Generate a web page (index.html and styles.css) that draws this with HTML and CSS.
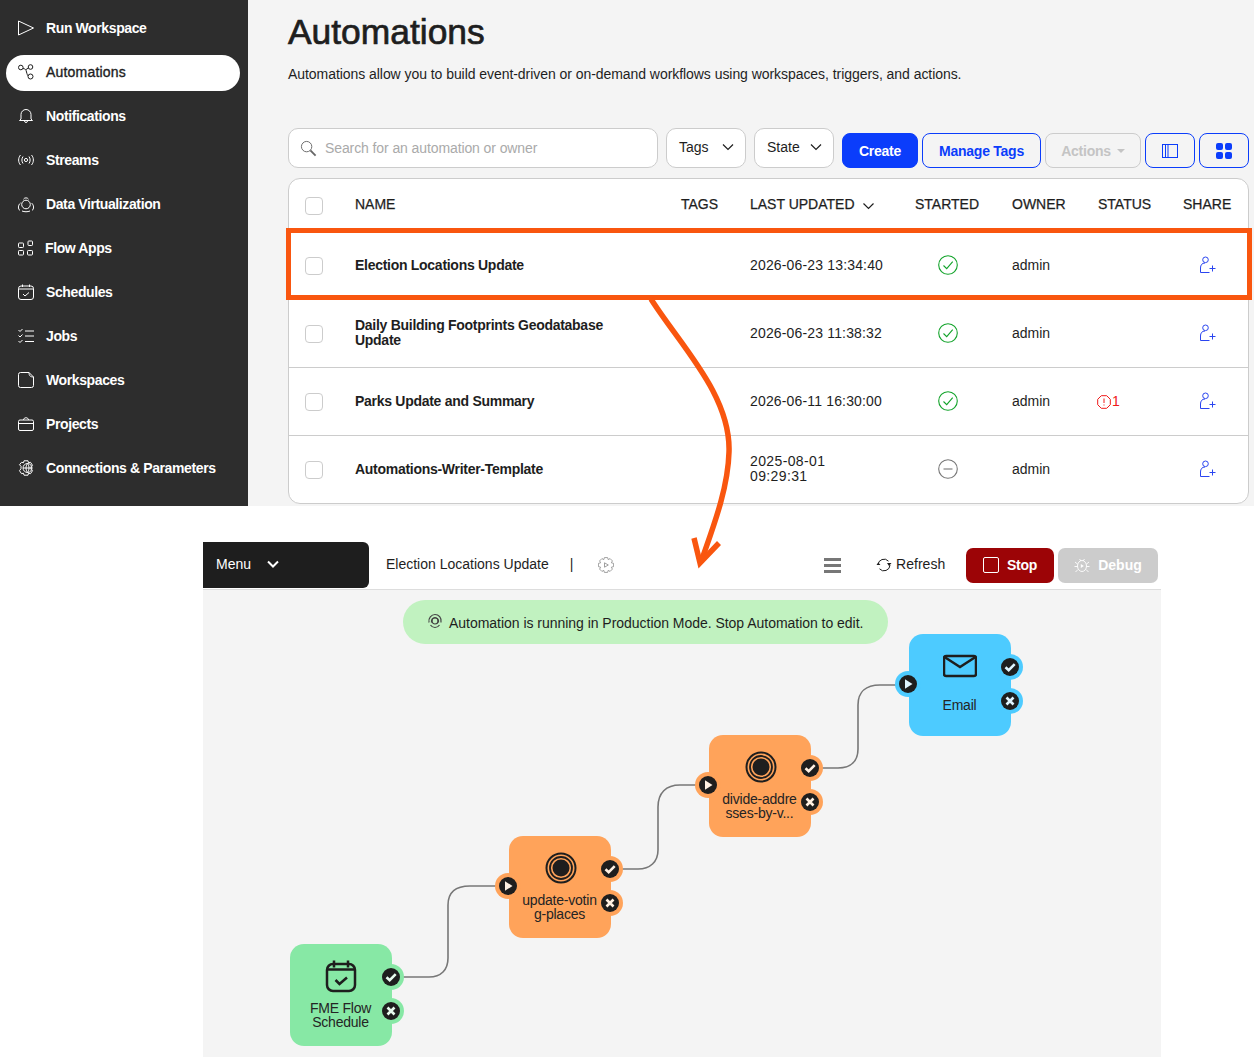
FILE: index.html
```html
<!DOCTYPE html>
<html lang="en">
<head>
<meta charset="utf-8">
<title>Automations</title>
<link rel="stylesheet" href="styles.css">
</head>
<body>
<div class="page">
  <section class="admin">
    <nav class="sidebar">
      <a class="nav-item"><svg class="nav-icon" viewBox="0 0 16 16"><path d="M.5 1v14L15.5 8z"/></svg>Run Workspace</a>
      <a class="nav-item active"><svg class="nav-icon" viewBox="0 0 16 16"><circle cx="2.800" cy="3.500" r="2.300"/><circle cx="12.500" cy="3" r="2.300"/><circle cx="12.500" cy="12.500" r="2.500"/><path d="M5 4.500c3 .5 3 1.500 3.500 3.500s1 3.300 1.700 4M8 5.500l2.500-1.500"/></svg>Automations</a>
      <a class="nav-item"><svg class="nav-icon" viewBox="0 0 16 16"><path d="M3 11V6.500a5 5 0 0 1 10 0V11l1.500 1.500h-13zM6.500 13c0 2 3 2 3 0"/></svg>Notifications</a>
      <a class="nav-item"><svg class="nav-icon" viewBox="0 0 16 16"><circle cx="8" cy="8" r="1.600"/><path d="M5 4.500c-1.500 2-1.500 5 0 7M11 4.500c1.500 2 1.500 5 0 7M2.500 3c-2.500 3-2.500 7 0 10M13.500 3c2.500 3 2.500 7 0 10"/></svg>Streams</a>
      <a class="nav-item"><svg class="nav-icon" viewBox="0 0 16 16"><circle cx="8" cy="8.500" r="4.300"/><path d="M5.500 3.200a3 3 0 0 1 5 0M2.500 7C0 9-.3 13 2 14.500M13.500 7c2.500 2 2.800 6 .5 7.500M4 15c2.500 1 5.500 1 8 0"/></svg>Data Virtualization</a>
      <a class="nav-item flow"><svg class="nav-icon" viewBox="0 0 16 16"><rect x=".5" y="3" width="5" height="4.500" rx=".8"/><rect x="10" y="1" width="4.500" height="4.500" rx=".8"/><rect x=".5" y="10.500" width="5" height="4.500" rx=".8"/><rect x="9.500" y="10.500" width="5" height="4.500" rx=".8"/></svg>Flow Apps</a>
      <a class="nav-item"><svg class="nav-icon" viewBox="0 0 16 16"><rect x=".5" y="2" width="15" height="13.500" rx="2.500"/><path d="M4.500.5v2.500M11.500.5v2.500M.5 5h15M5 10l2 2 4-3.500"/></svg>Schedules</a>
      <a class="nav-item"><svg class="nav-icon" viewBox="0 0 16 16"><path d="M.5 2l1.500 1.500L4.500 1M.5 7.500L2 9l2.500-2.500M.5 13L2 14.500 4.500 12M7 3h9M7 8h9M7 13.500h9"/></svg>Jobs</a>
      <a class="nav-item"><svg class="nav-icon" viewBox="0 0 16 16"><path d="M2.500.5h8.500l4.500 4.500v8.500a2 2 0 0 1-2 2h-11a2 2 0 0 1-2-2v-11a2 2 0 0 1 2-2zM11 .5c0 3 1 4.500 4.500 4.500"/></svg>Workspaces</a>
      <a class="nav-item"><svg class="nav-icon" viewBox="0 0 16 16"><rect x=".5" y="4" width="15" height="10.500" rx="1.500"/><path d="M.5 7.500h15M5.500 4c0-3 5-3 5 0"/></svg>Projects</a>
      <a class="nav-item"><svg class="nav-icon" viewBox="0 0 16 16"><path d="M6 .8h4l.5 2 2-.5 2 3-1.500 1.500v2.400l1.500 1.500-2 3-2-.5-.5 2H6l-.5-2-2 .5-2-3L3 8.700V6.300L1.500 4.800l2-2.500 2 .5z"/><circle cx="9.500" cy="8" r="4.500"/><path d="M5 8h9M9.500 3.500c-2 3-2 6 0 9M9.500 3.500c2 3 2 6 0 9"/></svg>Connections &amp; Parameters</a>
    </nav>
    <main class="content">
      <h1 class="title">Automations</h1>
      <p class="intro">Automations allow you to build event-driven or on-demand workflows using workspaces, triggers, and actions.</p>
      <div class="toolbar">
        <label class="search">
          <svg class="search-icon" viewBox="0 0 18 18"><circle cx="7" cy="7" r="5.500"/><path d="M11 11l5.500 5.500" stroke-width="2"/></svg>
          <span>Search for an automation or owner</span>
        </label>
        <div class="select">Tags<svg class="chev" viewBox="0 0 12 8"><path d="M1 1.500l5 5 5-5"/></svg></div>
        <div class="select">State<svg class="chev" viewBox="0 0 12 8"><path d="M1 1.500l5 5 5-5"/></svg></div>
        <button class="btn btn-primary create">Create</button>
        <button class="btn btn-outline manage">Manage Tags</button>
        <button class="btn btn-disabled actions">Actions<i class="caret"></i></button>
        <button class="btn btn-outline square"><svg class="view-icon" viewBox="0 0 16 14"><rect x=".5" y=".5" width="15" height="13"/><path d="M3.500.5v13M6 .5v13"/></svg></button>
        <button class="btn btn-outline square"><span class="grid-icon"><i></i><i></i><i></i><i></i></span></button>
      </div>
      <div class="table">
        <div class="row head">
          <span class="check"></span><span>NAME</span><span>TAGS</span>
          <span class="sort">LAST UPDATED<svg class="chev sort-chev" viewBox="0 0 12 8"><path d="M1 1.500l5 5 5-5"/></svg></span>
          <span>STARTED</span><span>OWNER</span><span>STATUS</span><span>SHARE</span>
        </div>
        <div class="row">
          <span class="check"></span><strong>Election Locations Update</strong><span></span><span class="date">2026-06-23 13:34:40</span>
          <span class="state-cell"><svg class="state ok" viewBox="0 0 20 20"><circle cx="10" cy="10" r="9.300"/><path d="M5.500 10.500l3.200 3.200 6-7"/></svg></span>
          <span>admin</span><span></span>
          <span><svg class="share" viewBox="0 0 18 18"><circle cx="7.500" cy="3.800" r="2.800"/><path d="M7 7c-3 0-4.500 2-4.500 5v4.500h9M11.500 12.500h6M14.500 9.500v6"/></svg></span>
        </div>
        <div class="row">
          <span class="check"></span><strong class="wrap">Daily Building Footprints Geodatabase Update</strong><span></span><span class="date">2026-06-23 11:38:32</span>
          <span class="state-cell"><svg class="state ok" viewBox="0 0 20 20"><circle cx="10" cy="10" r="9.300"/><path d="M5.500 10.500l3.200 3.200 6-7"/></svg></span>
          <span>admin</span><span></span>
          <span><svg class="share" viewBox="0 0 18 18"><circle cx="7.500" cy="3.800" r="2.800"/><path d="M7 7c-3 0-4.500 2-4.500 5v4.500h9M11.500 12.500h6M14.500 9.500v6"/></svg></span>
        </div>
        <div class="row">
          <span class="check"></span><strong>Parks Update and Summary</strong><span></span><span class="date">2026-06-11 16:30:00</span>
          <span class="state-cell"><svg class="state ok" viewBox="0 0 20 20"><circle cx="10" cy="10" r="9.300"/><path d="M5.500 10.500l3.200 3.200 6-7"/></svg></span>
          <span>admin</span>
          <span class="alert"><svg class="alert-icon" viewBox="0 0 14 14"><path d="M4.300.7h5.400l3.600 3.600v5.400l-3.600 3.600H4.300L.7 9.700V4.300z"/><path d="M7 3.500v4.500M7 9.500v1"/></svg>1</span>
          <span><svg class="share" viewBox="0 0 18 18"><circle cx="7.500" cy="3.800" r="2.800"/><path d="M7 7c-3 0-4.500 2-4.500 5v4.500h9M11.500 12.500h6M14.500 9.500v6"/></svg></span>
        </div>
        <div class="row last">
          <span class="check"></span><strong>Automations-Writer-Template</strong><span></span><span class="date date-wrap">2025-08-01<br>09:29:31</span>
          <span class="state-cell"><svg class="state off" viewBox="0 0 20 20"><circle cx="10" cy="10" r="9.300"/><path d="M5.500 10h9"/></svg></span>
          <span>admin</span><span></span>
          <span><svg class="share" viewBox="0 0 18 18"><circle cx="7.500" cy="3.800" r="2.800"/><path d="M7 7c-3 0-4.500 2-4.500 5v4.500h9M11.500 12.500h6M14.500 9.500v6"/></svg></span>
        </div>
      </div>
    </main>
  </section>

  <section class="editor">
    <div class="editor-bar">
      <button class="menu">Menu<svg class="menu-chev" viewBox="0 0 12 8"><path d="M1 1.500l5 5 5-5"/></svg></button>
      <span class="editor-title">Election Locations Update</span>
      <span class="pipe">|</span>
      <svg class="gear" viewBox="0 0 16 16"><path d="M6.400.6h3.200l.6 2 1.900-1 2.300 2.300-1 1.900 2.200.6v3.200l-2.200.6 1 1.900-2.300 2.300-1.900-1-.6 2H6.400l-.6-2-1.900 1-2.300-2.300 1-1.900-2.200-.6V6.400l2.200-.6-1-1.900 2.300-2.300 1.900 1z"/><path d="M6.500 5.800v4.400L10.300 8z"/></svg>
      <div class="editor-actions">
        <span class="burger"><i></i><i></i><i></i></span>
        <span class="refresh"><svg class="refresh-icon" viewBox="0 0 16 16"><path d="M2 8a6 6 0 0 1 10.500-3.800M14 8a6 6 0 0 1-10.500 3.800"/><path class="solid" d="M11 5.500h4.500L13 8.500zM.5 7.500h4L2.200 5z" transform="translate(0 .5)"/></svg>Refresh</span>
        <button class="stop"><i class="stop-box"></i>Stop</button>
        <button class="debug"><svg class="debug-icon" viewBox="0 0 16 16"><ellipse cx="8" cy="9" rx="4.500" ry="5.500"/><path d="M5.500 2l1.500 2M10.500 2L9 4M1 5l2.500 2M15 5l-2.500 2M.5 9.500h3M15.500 9.500h-3M1.500 15l2.500-2.500M14.500 15L12 12.500"/><path class="solid" d="M6.800 7v4l3-2z"/></svg>Debug</button>
      </div>
    </div>
    <div class="canvas">
      <div class="banner"><svg class="banner-icon" viewBox="0 0 16 16"><circle cx="8" cy="8" r="3"/><path d="M2 9.500C1 5 4.500 1.500 8 1.500s7 3 6 8M4.500 9.500c-.5-3 1.500-5 3.500-5s4 2 3.500 5M8 14.500c2 0 3.500-1 4.500-2.500M8 14.500c-2 0-3.500-1-4.500-2.500"/></svg>Automation is running in Production Mode. Stop Automation to edit.</div>
      <svg class="wires" viewBox="0 0 958 467">
        <path d="M198 387h28c12 0 19-7 19-19v-53c0-13 8-19 22-19h34"/>
        <path d="M417 279h18c12 0 20-7 20-19v-43c0-14 8-22 22-22h24"/>
        <path d="M617 178h18c13 0 20-7 20-19v-44c0-13 8-20 22-20h24"/>
      </svg>

      <div class="node schedule node-fme">
        <svg class="node-icon" viewBox="0 0 34 34"><rect x="3" y="5" width="28" height="27" rx="6"/><path d="M10 1.500v7M24 1.500v7M3 10.500h28M11.500 21l4 4 7.500-6.500"/></svg>
        <div class="node-label">FME Flow<br>Schedule</div>
        <svg class="port port-ok" viewBox="0 0 26 26"><circle class="halo" cx="13" cy="13" r="13"/><circle class="core" cx="13" cy="13" r="9"/><path class="mark" d="M8.500 13.200l3.200 3 6-6"/></svg>
        <svg class="port port-fail" viewBox="0 0 26 26"><circle class="halo" cx="13" cy="13" r="13"/><circle class="core" cx="13" cy="13" r="9"/><path class="mark" d="M9.500 9.500l7 7M16.500 9.500l-7 7"/></svg>
      </div>

      <div class="node workspace node-update">
        <svg class="node-icon" viewBox="0 0 34 34"><circle class="thick" cx="17" cy="17" r="14.500"/><circle cx="17" cy="17" r="11"/><circle class="fill" cx="17" cy="17" r="8.500"/></svg>
        <div class="node-label">update-votin<br>g-places</div>
        <svg class="port port-in" viewBox="0 0 26 26"><circle class="halo" cx="13" cy="13" r="13"/><circle class="core" cx="13" cy="13" r="9"/><path class="play" d="M10 8.200v9.600l7.500-4.800z"/></svg>
        <svg class="port port-ok" viewBox="0 0 26 26"><circle class="halo" cx="13" cy="13" r="13"/><circle class="core" cx="13" cy="13" r="9"/><path class="mark" d="M8.500 13.200l3.200 3 6-6"/></svg>
        <svg class="port port-fail" viewBox="0 0 26 26"><circle class="halo" cx="13" cy="13" r="13"/><circle class="core" cx="13" cy="13" r="9"/><path class="mark" d="M9.500 9.500l7 7M16.500 9.500l-7 7"/></svg>
      </div>

      <div class="node workspace node-divide">
        <svg class="node-icon" viewBox="0 0 34 34"><circle class="thick" cx="17" cy="17" r="14.500"/><circle cx="17" cy="17" r="11"/><circle class="fill" cx="17" cy="17" r="8.500"/></svg>
        <div class="node-label">divide-addre<br>sses-by-v...</div>
        <svg class="port port-in" viewBox="0 0 26 26"><circle class="halo" cx="13" cy="13" r="13"/><circle class="core" cx="13" cy="13" r="9"/><path class="play" d="M10 8.200v9.600l7.500-4.800z"/></svg>
        <svg class="port port-ok" viewBox="0 0 26 26"><circle class="halo" cx="13" cy="13" r="13"/><circle class="core" cx="13" cy="13" r="9"/><path class="mark" d="M8.500 13.200l3.200 3 6-6"/></svg>
        <svg class="port port-fail" viewBox="0 0 26 26"><circle class="halo" cx="13" cy="13" r="13"/><circle class="core" cx="13" cy="13" r="9"/><path class="mark" d="M9.500 9.500l7 7M16.500 9.500l-7 7"/></svg>
      </div>

      <div class="node email node-email">
        <svg class="node-icon" viewBox="0 0 34 34"><rect x="1" y="7" width="32" height="20" rx="2"/><path d="M1.500 8L17 18 32.500 8"/></svg>
        <div class="node-label">Email</div>
        <svg class="port port-in" viewBox="0 0 26 26"><circle class="halo" cx="13" cy="13" r="13"/><circle class="core" cx="13" cy="13" r="9"/><path class="play" d="M10 8.200v9.600l7.500-4.800z"/></svg>
        <svg class="port port-ok" viewBox="0 0 26 26"><circle class="halo" cx="13" cy="13" r="13"/><circle class="core" cx="13" cy="13" r="9"/><path class="mark" d="M8.500 13.200l3.200 3 6-6"/></svg>
        <svg class="port port-fail" viewBox="0 0 26 26"><circle class="halo" cx="13" cy="13" r="13"/><circle class="core" cx="13" cy="13" r="9"/><path class="mark" d="M9.500 9.500l7 7M16.500 9.500l-7 7"/></svg>
      </div>
    </div>
  </section>

  <div class="highlight"></div>
  <svg class="arrow" viewBox="0 0 1254 1057">
    <path d="M651 299C680 345 731 395 729 452C728 490 712 530 701 562"/>
    <path d="M694 538L700 563L719 543"/>
  </svg>
</div>
</body>
</html>
```
FILE: styles.css
```css
* { box-sizing: border-box; }
html, body { margin: 0; padding: 0; }
body {
  background: #fff;
  color: #1e1e1e;
  font-family: "Liberation Sans", Arial, sans-serif;
  font-size: 14px;
}
.page { position: relative; width: 1254px; height: 1057px; overflow: hidden; }

/* upper screenshot */
.admin { display: flex; height: 506px; background: #f4f4f4; }
.sidebar {
  width: 248px;
  flex: none;
  background: #2d2d2d;
  padding: 11px 8px 0 6px;
  display: flex;
  flex-direction: column;
  gap: 8px;
}
.nav-item {
  display: flex;
  align-items: center;
  gap: 12px;
  height: 36px;
  padding: 0 12px 2px;
  border-radius: 18px;
  color: #fff;
  font-weight: 700;
  font-size: 14px;
  letter-spacing: -.39px;
}
.nav-item.active { background: #fff; color: #1e1e1e; font-weight: 400; letter-spacing: .2px; -webkit-text-stroke: .35px #1e1e1e; }
.nav-item.flow { gap: 11px; }
.nav-icon { width: 16px; height: 16px; flex: none; fill: none; stroke: currentColor; stroke-width: 1; overflow: visible; }

.content { flex: 1; padding: 12px 5px 0 40px; min-width: 0; }
.title { margin: 0; font-size: 35.400px; line-height: 40px; font-weight: 400; -webkit-text-stroke: .7px #1e1e1e; }
.intro { margin: 12px 0 0; line-height: 20px; letter-spacing: -.055px; }

.toolbar { display: flex; align-items: flex-end; margin-top: 44px; height: 40px; }
.search {
  width: 370px;
  height: 40px;
  display: flex;
  align-items: center;
  gap: 8px;
  padding: 0 11px;
  background: #fff;
  border: 1px solid #ccc;
  border-radius: 10px;
  color: #aaa;
  letter-spacing: -.1px;
}
.search-icon { width: 17px; height: 17px; fill: none; stroke: #666; stroke-width: 1; }
.select {
  width: 80px;
  height: 40px;
  margin-left: 8px;
  display: flex;
  align-items: center;
  justify-content: space-between;
  padding: 0 11px 2px 12px;
  background: #fff;
  border: 1px solid #ccc;
  border-radius: 10px;
}
.chev { width: 12px; height: 8px; fill: none; stroke: #1e1e1e; stroke-width: 1.200; }
.btn {
  height: 35px;
  padding: 0;
  display: inline-flex;
  align-items: center;
  justify-content: center;
  border-radius: 8px;
  font: 700 14px "Liberation Sans", Arial, sans-serif;
  letter-spacing: -.25px;
}
.btn-primary { background: #0b3dfb; border: 1px solid #0b3dfb; color: #fff; }
.btn-outline { background: #f4f4f4; border: 1px solid #0b3dfb; color: #0b3dfb; }
.btn-disabled { background: #f4f4f4; border: 1px solid #ccc; color: #c4c4c4; }
.create { width: 76px; margin-left: 8px; }
.manage { width: 119px; margin-left: 4px; }
.actions { width: 96px; margin-left: 4px; gap: 6px; }
.square { width: 50px; margin-left: 4px; }
.caret { width: 0; height: 0; border: 4px solid transparent; border-top-color: #c4c4c4; border-bottom-width: 0; }
.view-icon { width: 16px; height: 14px; fill: none; stroke: #0b3dfb; stroke-width: 1; }
.grid-icon { display: grid; grid-template-columns: 7px 7px; gap: 2px; }
.grid-icon i { width: 7px; height: 7px; border-radius: 2px; background: #0b3dfb; }

.table {
  margin-top: 10px;
  height: 326px;
  background: #fff;
  border: 1px solid #ccc;
  border-radius: 12px;
}
.row {
  display: grid;
  grid-template-columns: 66px 326px 69px 165px 97px 86px 85px 1fr;
  align-items: center;
  height: 68px;
  border-bottom: 1px solid #ccc;
  line-height: 15px;
}
.row strong { letter-spacing: -.28px; }
.row.last { height: 67px; border-bottom: 0; }
.row.head { height: 53px; padding-bottom: 2px; border-bottom: 0; -webkit-text-stroke: .25px #1e1e1e; }
.head .check { margin-top: 3px; }
.check {
  width: 18px;
  height: 18px;
  margin-left: 16px;
  border: 1px solid #ccc;
  border-radius: 4px;
  background: #fff;
}
.date { letter-spacing: .16px; }
.row .wrap { max-width: 260px; padding-bottom: 2px; }
.date-wrap { padding-bottom: 2px; letter-spacing: .38px; }
.sort { display: flex; align-items: center; gap: 7px; }
.sort-chev { width: 13px; height: 8px; margin-top: 2px; }
.state { width: 20px; height: 20px; margin: -1px 0 0 23px; display: block; fill: none; stroke-width: 1.100; }
.ok { stroke: #12a32a; }
.off { stroke: #777; }
.alert { display: flex; align-items: center; gap: 1px; color: #f01818; margin-left: -1px; }
.alert-icon { width: 14px; height: 14px; fill: none; stroke: #f01818; stroke-width: 1; }
.share { display: block; width: 18px; height: 18px; margin: -2px 0 0 15px; fill: none; stroke: #2a45f0; stroke-width: 1; }

/* lower screenshot */
.editor { margin: 36px 93px 0 203px; height: 515px; }
.editor-bar { display: flex; align-items: center; height: 48px; border-bottom: 1px solid #ddd; padding-bottom: 1px; }
.menu {
  width: 166px;
  height: 46px;
  display: flex;
  align-items: center;
  gap: 16px;
  padding: 0 0 2px 13px;
  background: #1e1e1e;
  border: 0;
  border-radius: 0 6px 6px 0;
  color: #fff;
  font: 14px "Liberation Sans", Arial, sans-serif;
}
.menu-chev { width: 12px; height: 8px; fill: none; stroke: #fff; stroke-width: 2; }
.editor-title { margin-left: 17px; padding-bottom: 2px; }
.pipe { margin-left: 21px; padding-bottom: 2px; }
.gear { width: 16px; height: 16px; margin-left: 25px; fill: none; stroke: #888; stroke-width: .8; stroke-linejoin: round; }
.editor-actions { margin-left: auto; display: flex; align-items: center; padding-right: 3px; }
.burger { display: grid; gap: 3px; width: 17px; margin-right: 35px; }
.burger i { height: 3px; background: #777; }
.refresh { display: flex; align-items: center; gap: 4px; width: 90px; letter-spacing: .03px; padding-bottom: 2px; }
.refresh-icon { width: 16px; height: 16px; fill: none; stroke: #1e1e1e; stroke-width: 1; margin-top: 2px; }
.refresh-icon .solid { fill: #1e1e1e; stroke: none; }
.stop, .debug {
  height: 35px;
  display: flex;
  align-items: center;
  justify-content: center;
  border: 0;
  border-radius: 7px;
  color: #fff;
  font: 700 14px "Liberation Sans", Arial, sans-serif;
  padding: 0 0 1px;
}
.stop { width: 88px; background: #9c0406; gap: 8px; letter-spacing: -.25px; }
.stop-box { width: 16px; height: 16px; border: 1px solid #fff; border-radius: 2px; }
.debug { width: 100px; margin-left: 4px; background: #ccc; gap: 8px; }
.debug-icon { width: 16px; height: 16px; fill: none; stroke: #fff; stroke-width: .9; }
.debug-icon .solid { fill: #fff; stroke: none; }

.canvas { position: relative; height: 467px; background: #f4f4f4; }
.banner {
  position: absolute;
  left: 200px;
  top: 10px;
  width: 485px;
  height: 44px;
  display: flex;
  align-items: center;
  gap: 6px;
  padding: 2px 0 0 24px;
  background: #c1f2c0;
  border-radius: 22px;
  letter-spacing: -.03px;
}
.banner-icon { width: 16px; height: 16px; margin-top: -5px; fill: none; stroke: #444; stroke-width: 1.200; }
.wires { position: absolute; inset: 0; width: 958px; height: 467px; fill: none; stroke: #777; stroke-width: 1.600; }

.node {
  position: absolute;
  width: 102px;
  height: 102px;
  border-radius: 14px;
  padding: 15px 0 10px;
  display: flex;
  flex-direction: column;
  align-items: center;
  background: var(--node);
}
.schedule { --node: #87e8a5; --mark: #e7fbee; }
.workspace { --node: #ffa35a; --mark: #fff0e2; }
.email { --node: #4dcbff; --mark: #dff5ff; }
.node-fme { left: 87px; top: 354px; }
.node-update { left: 306px; top: 246px; }
.node-divide { left: 506px; top: 145px; }
.node-email { left: 706px; top: 44px; }
.node-icon { width: 34px; height: 34px; flex: none; fill: none; stroke: #1e1e1e; stroke-width: 2.500; }
.workspace .node-icon { margin-left: 2px; }
.node-icon .thick { stroke-width: 2; }
.node-icon circle { stroke-width: 1.800; }
.node-icon .fill { fill: #1e1e1e; stroke: none; }
.node-label { flex: 1; display: flex; align-items: center; text-align: center; line-height: 14px; font-size: 14px; color: #242424; letter-spacing: -.22px; position: relative; left: -.5px; }
.port { position: absolute; width: 26px; height: 26px; }
.port-in { left: -14px; top: 37px; }
.port-ok { left: 88px; top: 20px; }
.port-fail { left: 88px; top: 54px; }
.halo { fill: var(--node); }
.core { fill: #1e1e1e; }
.mark { fill: none; stroke: var(--mark); stroke-width: 2.600; }
.play { fill: var(--mark); }

/* annotations laid over both screenshots */
.highlight {
  position: absolute;
  left: 286px;
  top: 228px;
  width: 966px;
  height: 72px;
  border: 5px solid #f9560f;
  pointer-events: none;
}
.arrow {
  position: absolute;
  inset: 0;
  width: 1254px;
  height: 1057px;
  fill: none;
  stroke: #f9560f;
  stroke-width: 5.500;
  pointer-events: none;
}
```
